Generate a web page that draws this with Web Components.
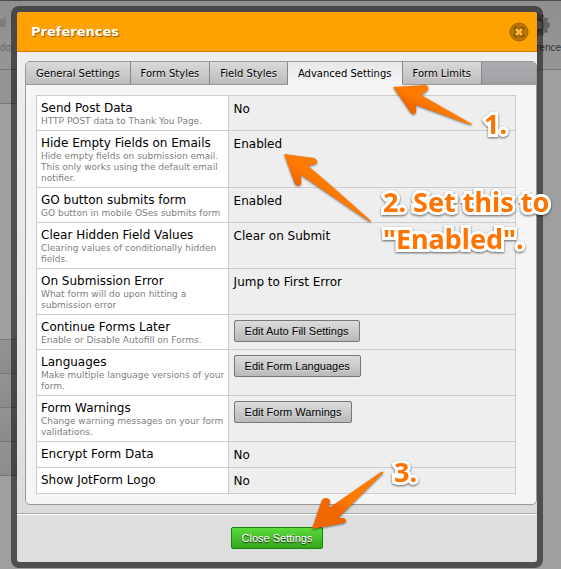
<!DOCTYPE html>
<html lang="en">
<head>
<meta charset="utf-8">
<title>Preferences</title>
<style>
  html, body {
    margin: 0;
    height: 100%;
    overflow: hidden;
    background: #9e9e9e;
    font-family: "DejaVu Sans", Verdana, sans-serif;
  }
  body {
    display: grid;
  }
  builder-page, settings-dialog {
    grid-area: 1 / 1;
  }
</style>
</head>
<body>
<builder-page></builder-page>

<settings-dialog heading="Preferences">
  <tab-strip slot="tabs">
    <tab-item>General Settings</tab-item>
    <tab-item>Form Styles</tab-item>
    <tab-item>Field Styles</tab-item>
    <tab-item selected>Advanced Settings</tab-item>
    <tab-item>Form Limits</tab-item>
  </tab-strip>
  <settings-table></settings-table>
  <action-button slot="footer" kind="green">Close Settings</action-button>
</settings-dialog>

<note-arrow style="left: 390px; top: 82px" shape="one"></note-arrow>
<note-arrow style="left: 280px; top: 150px" shape="two"></note-arrow>
<note-arrow style="left: 308px; top: 468px" shape="three"></note-arrow>
<note-text style="left: 484px; top: 105px">1.</note-text>
<note-text style="left: 383px; top: 183px">2. Set this to<br>"Enabled".</note-text>
<note-text style="left: 394px; top: 453px">3.</note-text>

<script>
class BuilderPage extends HTMLElement {
  constructor() {
    super();
    const shadow = this.attachShadow({ mode: 'open' });
    shadow.innerHTML = `
    <style>
      :host {
        display: flex;
        flex-direction: column;
        overflow: hidden;
        background: #9f9f9f;
        font: 10px/14px "Liberation Sans", Arial, sans-serif;
        color: #333;
      }
      .toolbar {
        display: flex;
        justify-content: space-between;
        height: 68px;
        border-top: 1px solid #4c4c4c;
        border-bottom: 1px solid #777;
        background: linear-gradient(#8f8f8f, #969696);
      }
      .tool {
        display: flex;
        flex-direction: column;
        align-items: flex-end;
        gap: 2px;
        padding-top: 11px;
      }
      .tool.off {
        align-items: flex-start;
        color: #666;
      }
      .tool svg { display: block; }
      .sub {
        height: 33px;
        border-bottom: 1px solid #777;
        background: #949494;
        width: 20px;
      }
      .list {
        width: 20px;
        margin-top: 235px;
        border-top: 1px solid #777;
      }
      .list div {
        height: 33px;
        border-bottom: 1px solid #777;
        background: linear-gradient(#939393, #8b8b8b);
      }
    </style>
    <div class="toolbar">
      <div class="tool off">
        <svg width="6" height="27" viewBox="0 0 6 27"><path d="M0 6L2 8L6 4V15H0Z" fill="#7c7c7c"/></svg>
        <span>do</span>
      </div>
      <div class="tool">
        <svg width="40" height="27" viewBox="0 0 40 27">
          <circle cx="17" cy="13" r="10" fill="none" stroke="#5c5c5c" stroke-width="3" stroke-dasharray="3 2"/>
          <circle cx="17" cy="13" r="7" fill="none" stroke="#666" stroke-width="6"/>
          <circle cx="17" cy="13" r="6" fill="none" stroke="#484848"/>
        </svg>
        <span>rence</span>
      </div>
    </div>
    <div class="sub"></div>
    <div class="list"><div></div><div></div><div></div><div></div></div>
    `;
  }
}

class SettingsDialog extends HTMLElement {
  connectedCallback() {
    const shadow = this.attachShadow({ mode: 'open' });
    const heading = this.getAttribute('heading') || '';
    shadow.innerHTML = `
    <style>
      :host {
        display: block;
        position: relative;
        align-self: start;
        margin: 6px 18px 0 11px;
        border: 6px solid rgba(0, 0, 0, 0.5);
        border-radius: 8px;
      }
      .window {
        border-radius: 4px;
        overflow: hidden;
        background: linear-gradient(#f0f0f0, #dadada);
      }
      header {
        display: flex;
        align-items: center;
        justify-content: space-between;
        height: 39px;
        padding: 0 8px 0 14px;
        border-bottom: 1px solid #d67d00;
        background: #ffa200;
      }
      h1 {
        margin: 0;
        font-size: 13px;
        font-weight: bold;
        color: #fff;
        text-shadow: 1px 1px 1px #985f00;
      }
      .close {
        display: block;
        padding: 0;
        border: 0;
        background: none;
      }
      .close svg { display: block; }
      .panel {
        margin: 9px 0 8px 8px;
        border: 1px solid #999;
        border-radius: 5px;
        background: #f5f5f5;
        overflow: hidden;
      }
      .content { padding: 10px 20px 10px 10px; }
      footer {
        display: flex;
        justify-content: center;
        padding: 13px 0;
        border-top: 1px solid #aaa;
        box-shadow: inset 0 1px #fff;
        background: #dedede;
      }
    </style>
    <div class="window" role="dialog" aria-label="${heading}">
      <header>
        <h1>${heading}</h1>
        <button class="close" aria-label="Close">
          <svg width="20" height="20" viewBox="0 0 20 20">
            <circle cx="10" cy="10" r="9" fill="#b97500" stroke="#9c6300"/>
            <path d="M7 7L13 13M13 7L7 13" stroke="#8b5800" stroke-width="5" stroke-linecap="round"/>
            <path d="M7 7L13 13M13 7L7 13" stroke="#ffb733" stroke-width="3"/>
          </svg>
        </button>
      </header>
      <div class="panel">
        <slot name="tabs"></slot>
        <div class="content"><slot></slot></div>
      </div>
      <footer><slot name="footer"></slot></footer>
    </div>
    `;
  }
}

class TabStrip extends HTMLElement {
  constructor() {
    super();
    this.attachShadow({ mode: 'open' }).innerHTML = `
    <style>
      :host {
        display: flex;
        height: 23px;
        background: linear-gradient(#a9abad, #a2a4a7 80%, #9b9b9b);
      }
    </style>
    <slot></slot>
    `;
  }
}

class TabItem extends HTMLElement {
  constructor() {
    super();
    this.attachShadow({ mode: 'open' }).innerHTML = `
    <style>
      :host { display: flex; }
      button {
        padding: 0 10px;
        border: 0;
        border-right: 1px solid #888;
        border-bottom: 1px solid #999;
        background: linear-gradient(#dadada, #bcbcbc);
        font: inherit;
        font-size: 10px;
        color: #000;
        text-shadow: 0 1px #eee;
        white-space: nowrap;
      }
      :host([selected]) button {
        border-bottom-color: #f5f5f5;
        background: linear-gradient(#e8e8e8, #f5f5f5);
      }
    </style>
    <button role="tab"><slot></slot></button>
    `;
  }
}

class ActionButton extends HTMLElement {
  constructor() {
    super();
    this.attachShadow({ mode: 'open' }).innerHTML = `
    <style>
      :host { display: inline-flex; }
      button {
        height: 22px;
        padding: 0 10px;
        border: 1px solid #777;
        border-radius: 2px;
        background: linear-gradient(#dcdcdc, #b9b9b9);
        font: 11px "Liberation Sans", Arial, sans-serif;
        color: #000;
        text-shadow: 0 1px #ddd;
        white-space: nowrap;
      }
      :host([kind=green]) button {
        border-color: #14830b;
        background: linear-gradient(#5bdb3a, #36a51d);
        color: #fff;
        text-shadow: 0 1px 1px #222;
      }
    </style>
    <button><slot></slot></button>
    `;
  }
}

const settings = [
  { name: 'Send Post Data', info: 'HTTP POST data to Thank You Page.', value: 'No' },
  { name: 'Hide Empty Fields on Emails', info: 'Hide empty fields on submission email.<br>This only works using the default email<br>notifier.', value: 'Enabled' },
  { name: 'GO button submits form', info: 'GO button in mobile OSes submits form', value: 'Enabled' },
  { name: 'Clear Hidden Field Values', info: 'Clearing values of conditionally hidden<br>fields.', value: 'Clear on Submit' },
  { name: 'On Submission Error', info: 'What form will do upon hitting a<br>submission error', value: 'Jump to First Error' },
  { name: 'Continue Forms Later', info: 'Enable or Disable Autofill on Forms.', button: 'Edit Auto Fill Settings' },
  { name: 'Languages', info: 'Make multiple language versions of your<br>form.', button: 'Edit Form Languages' },
  { name: 'Form Warnings', info: 'Change warning messages on your form<br>validations.', button: 'Edit Form Warnings' },
  { name: 'Encrypt Form Data', value: 'No' },
  { name: 'Show JotForm Logo', value: 'No' }
];

class SettingsTable extends HTMLElement {
  connectedCallback() {
    const shadow = this.attachShadow({ mode: 'open' });
    let rows = '';
    for (const s of settings) {
      rows += `<tr>
        <th scope="row">${s.name}${s.info ? `<small>${s.info}</small>` : ''}</th>
        <td>${s.button ? `<action-button>${s.button}</action-button>` : s.value}</td>
      </tr>`;
    }
    shadow.innerHTML = `
    <style>
      :host { display: block; }
      table {
        width: 100%;
        border-collapse: collapse;
        table-layout: fixed;
        font-size: 12px;
        line-height: 16px;
        color: #000;
      }
      th, td {
        height: 26px;
        box-sizing: border-box;
        border: 1px solid #ccc;
        vertical-align: top;
        text-align: left;
        font-weight: normal;
        white-space: nowrap;
      }
      th {
        width: 40%;
        padding: 4px 4px 3px;
        background: #fff;
      }
      td {
        padding: 5px 5px 0;
        background: #eee;
      }
      small {
        display: block;
        font-size: 9px;
        line-height: 11px;
        color: #808080;
      }
      action-button { display: flex; }
    </style>
    <table>${rows}</table>
    `;
  }
}

const arrows = {
  one: 'M3 5L36 3Q40 5 37 9L31 13L82 42L81 43L26 23V30Q24 34 21 31Z',
  two: 'M4 4L34 8Q39 10 36 14L28 16Q42 27 91 71L90 72L21 25V34Q18 37 15 34Z',
  three: 'M4 61L14 32Q18 28 22 32L21 40L73 4Q76 3 75 5L30 50L36 50Q40 53 36 55Z'
};

class NoteArrow extends HTMLElement {
  connectedCallback() {
    const shadow = this.attachShadow({ mode: 'open' });
    shadow.innerHTML = `
    <style>
      :host {
        position: absolute;
        pointer-events: none;
        filter: drop-shadow(0 1px 1px rgba(0, 0, 0, 0.5));
      }
      svg { display: block; }
    </style>
    <svg width="96" height="76" viewBox="0 0 96 76">
      <defs><linearGradient id="g" x1="0" y1="1" x2="1" y2="0">
        <stop offset="0.35" stop-color="#f06600"/><stop offset="0.5" stop-color="#ff7a00"/>
      </linearGradient></defs>
      <path d="${arrows[this.getAttribute('shape')]}" fill="url(#g)"/>
    </svg>
    `;
  }
}

class NoteText extends HTMLElement {
  constructor() {
    super();
    this.attachShadow({ mode: 'open' }).innerHTML = `
    <style>
      :host {
        position: absolute;
        font: bold 27px/37px "Noto Sans", "Open Sans", sans-serif;
        color: #ff7300;
        white-space: nowrap;
        -webkit-text-stroke: 6px #fff;
        paint-order: stroke fill;
        stroke-linejoin: round;
        filter: drop-shadow(0 1px 1px rgba(0, 0, 0, 0.6));
      }
    </style>
    <slot></slot>
    `;
  }
}

customElements.define('builder-page', BuilderPage);
customElements.define('tab-strip', TabStrip);
customElements.define('tab-item', TabItem);
customElements.define('action-button', ActionButton);
customElements.define('settings-table', SettingsTable);
customElements.define('settings-dialog', SettingsDialog);
customElements.define('note-arrow', NoteArrow);
customElements.define('note-text', NoteText);
</script>
</body>
</html>
